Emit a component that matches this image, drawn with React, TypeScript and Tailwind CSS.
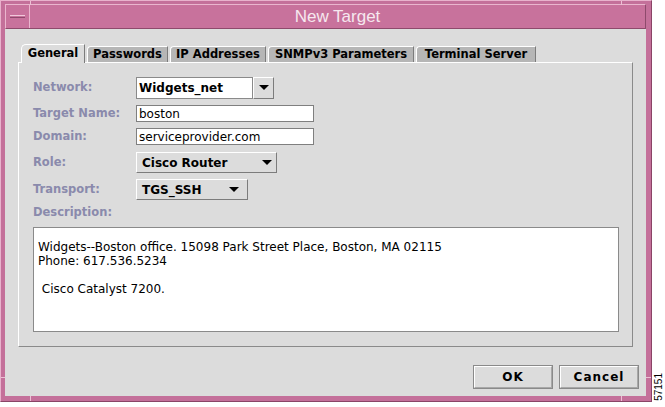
import React from "react";

const Tri = () => (
  <svg width="10" height="6" viewBox="0 0 10 6" className="block">
    <polygon points="0,0 10,0 5,5" fill="#000" />
  </svg>
);

function Tab({ label, w, selected }: { label: string; w: number; selected?: boolean }) {
  return (
    <div
      style={{ width: w }}
      className={
        selected
          ? "relative z-10 -mb-px h-[19px] bg-[#dcdcdc] border-l border-t border-r border-l-white border-t-white border-r-[#7c7c7c] rounded-tl-[5px] flex items-center justify-center font-bold text-[11.5px] text-black"
          : "h-[16px] bg-[#b6b6b6] border-l border-t border-r border-l-white border-t-white border-r-[#7c7c7c] rounded-tl-[4px] flex items-center justify-center font-bold text-[11.5px] text-black"
      }
    >
      {label}
    </div>
  );
}

function Label({ children }: { children: React.ReactNode }) {
  return <div className="w-[103px] shrink-0 font-bold text-[11.5px] text-[#8a8aac]">{children}</div>;
}

export default function App() {
  return (
    <div className="w-[665px] h-[407px] bg-white flex font-['DejaVu_Sans',sans-serif]">
      <div className="relative w-[652px] h-[402px] bg-[#c4709a] border border-t-[#e8b2cc] border-l-[#e8b2cc] border-r-[#8a4466] border-b-[#8a4466] pt-[3px] pl-[4px] pr-[5px] pb-[5px] flex flex-col">
        {/* resize ticks */}
        <div className="absolute left-[29px] top-0 w-px h-[4px] bg-[#ecc0d4]" />
        <div className="absolute left-[620px] top-0 w-px h-[4px] bg-[#ecc0d4]" />
        <div className="absolute left-[29px] bottom-0 w-px h-[5px] bg-[#ecc0d4]" />
        <div className="absolute left-[620px] bottom-0 w-px h-[5px] bg-[#ecc0d4]" />
        <div className="absolute left-0 top-[376px] w-[4px] h-px bg-[#ecc0d4]" />
        <div className="absolute right-0 top-[376px] w-[5px] h-px bg-[#ecc0d4]" />

        {/* title bar */}
        <div className="h-[25px] flex border border-t-[#eab6ce] border-l-[#eab6ce] border-r-[#8e4a6c] border-b-[#8e4a6c] bg-[#c8729c]">
          <div className="w-[24px] shrink-0 flex items-center justify-center border-r border-r-[#eab6ce]">
            <div className="w-[15px] h-[3px] border-t border-b border-t-[#f0c8da] border-b-[#8e4a6c]" />
          </div>
          <div className="flex-1 flex items-center justify-center font-['Liberation_Sans',sans-serif] text-[17px] text-[#f6e8ef]">
            New Target
          </div>
        </div>

        {/* content */}
        <div className="flex-1 bg-[#dcdcdc] px-[13px] pt-[15px] pb-[7px] flex flex-col">
          <div className="flex items-end gap-[2px] pl-[3px]">
            <Tab label="General" w={64} selected />
            <Tab label="Passwords" w={81} />
            <Tab label="IP Addresses" w={96} />
            <Tab label="SNMPv3 Parameters" w={146} />
            <Tab label="Terminal Server" w={120} />
          </div>
          <div className="h-[285px] border border-t-white border-l-white border-r-[#8a8a8a] border-b-[#8a8a8a] pl-[14px] pr-[13px] pt-[14px] flex flex-col">
            <div className="h-[22px] flex items-center">
              <Label>Network:</Label>
              <div className="flex h-[22px]">
                <div className="w-[117px] bg-white border border-[#8a8a8a] flex items-center pl-[2px] font-bold text-[12px] text-black">
                  Widgets_net
                </div>
                <div className="w-[21px] bg-[#dcdcdc] border border-t-white border-l-white border-r-[#7c7c7c] border-b-[#7c7c7c] flex items-center justify-center">
                  <Tri />
                </div>
              </div>
            </div>
            <div className="mt-[6px] h-[17px] flex items-center">
              <Label>Target Name:</Label>
              <div className="w-[178px] h-[17px] bg-white border border-[#7f7f7f] flex items-center pl-[2px] text-[12px] text-black">
                boston
              </div>
            </div>
            <div className="mt-[6px] h-[17px] flex items-center">
              <Label>Domain:</Label>
              <div className="w-[178px] h-[17px] bg-white border border-[#7f7f7f] flex items-center pl-[2px] text-[12px] text-black">
                serviceprovider.com
              </div>
            </div>
            <div className="mt-[7px] h-[21px] flex items-center">
              <Label>Role:</Label>
              <div className="w-[141px] h-[21px] bg-[#dcdcdc] border border-t-white border-l-white border-r-[#7c7c7c] border-b-[#7c7c7c] flex items-center justify-between pl-[5px] pr-[4px] font-bold text-[12px] text-black">
                <span>Cisco Router</span>
                <Tri />
              </div>
            </div>
            <div className="mt-[6px] h-[21px] flex items-center">
              <Label>Transport:</Label>
              <div className="w-[112px] h-[21px] bg-[#dcdcdc] border border-t-white border-l-white border-r-[#7c7c7c] border-b-[#7c7c7c] flex items-center justify-between pl-[5px] pr-[8px] font-bold text-[12px] text-black">
                <span>TGS_SSH</span>
                <Tri />
              </div>
            </div>
            <div className="mt-[5px] h-[16px] flex items-center">
              <Label>Description:</Label>
            </div>
            <div className="mt-[6px] h-[105px] bg-white border border-[#8a8a8a] pl-[4px] pt-[12px] text-[12px] leading-[14px] text-black whitespace-pre">
              {"Widgets--Boston office. 15098 Park Street Place, Boston, MA 02115\nPhone: 617.536.5234\n\n Cisco Catalyst 7200."}
            </div>
          </div>
          <div className="mt-[18px] mr-[-6px] flex justify-end gap-[6px]">
            <div className="w-[80px] h-[24px] border border-[#8a8a8a] flex">
              <div className="flex-1 border border-t-white border-l-white border-r-[#a8a8a8] border-b-[#a8a8a8] flex items-center justify-center font-bold text-[12px] tracking-[1px] text-black">
                OK
              </div>
            </div>
            <div className="w-[80px] h-[24px] border border-[#8a8a8a] flex">
              <div className="flex-1 border border-t-white border-l-white border-r-[#a8a8a8] border-b-[#a8a8a8] flex items-center justify-center font-bold text-[12px] tracking-[1px] text-black">
                Cancel
              </div>
            </div>
          </div>
        </div>
      </div>
      <div className="flex-1 flex flex-col justify-end items-center pb-[6px]">
        <div className="[writing-mode:vertical-rl] rotate-180 font-['Liberation_Sans',sans-serif] text-[10px] leading-[10px] text-black">
          57151
        </div>
      </div>
    </div>
  );
}
